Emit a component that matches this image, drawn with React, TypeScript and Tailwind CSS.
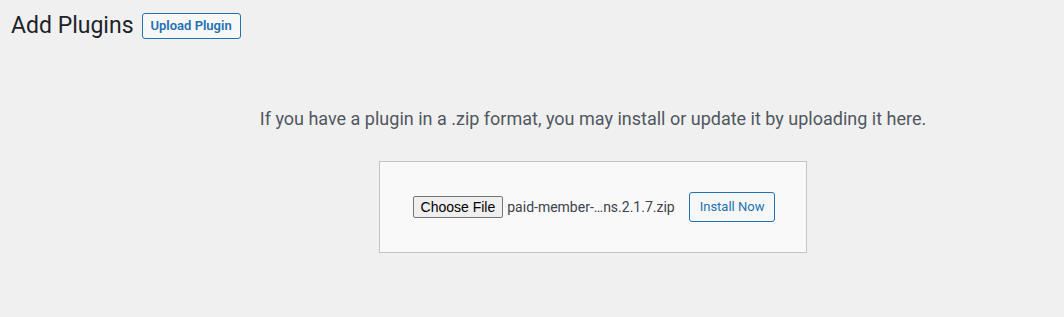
import React from "react";

const App = () => {
  return (
    <div className="min-h-[317px] w-full bg-[#f0f0f1] text-[#3c434a] font-['Roboto',_'Liberation_Sans',_sans-serif]">
      <div className="flex items-center gap-[8px] pl-[11px] pt-[11px]">
        <h1 className="text-[23px] leading-[29px] font-normal text-[#1d2327]">Add Plugins</h1>
        <button className="h-[26px] px-[8px] rounded-[3px] border border-[#2271b1] bg-[#f6f7f7] text-[13px] font-semibold text-[#2271b1]">
          Upload Plugin
        </button>
      </div>
      <div className="flex flex-col items-center pl-[122px] pt-[67px]">
        <p className="text-[18px] leading-[24px] text-[#50575e]">
          If you have a plugin in a .zip format, you may install or update it by uploading it here.
        </p>
        <div className="mt-[30px] flex h-[92px] w-[428px] items-center justify-center gap-[14px] border border-[#c3c4c7] bg-[#f9f9f9] pl-[2px]">
          <div className="flex items-center gap-[4px]">
            <button className="h-[22px] rounded-[2px] border border-[#767676] bg-[#efefef] px-[7px] text-[14px] leading-[20px] text-black font-['Liberation_Sans',_Arial,_sans-serif]">
              Choose File
            </button>
            <span className="text-[14px] text-[#3c434a]">paid-member-…ns.2.1.7.zip</span>
          </div>
          <button className="h-[30px] rounded-[3px] border border-[#2271b1] bg-[#f6f7f7] px-[10px] text-[13px] text-[#2271b1]">
            Install Now
          </button>
        </div>
      </div>
    </div>
  );
};

export default App;
